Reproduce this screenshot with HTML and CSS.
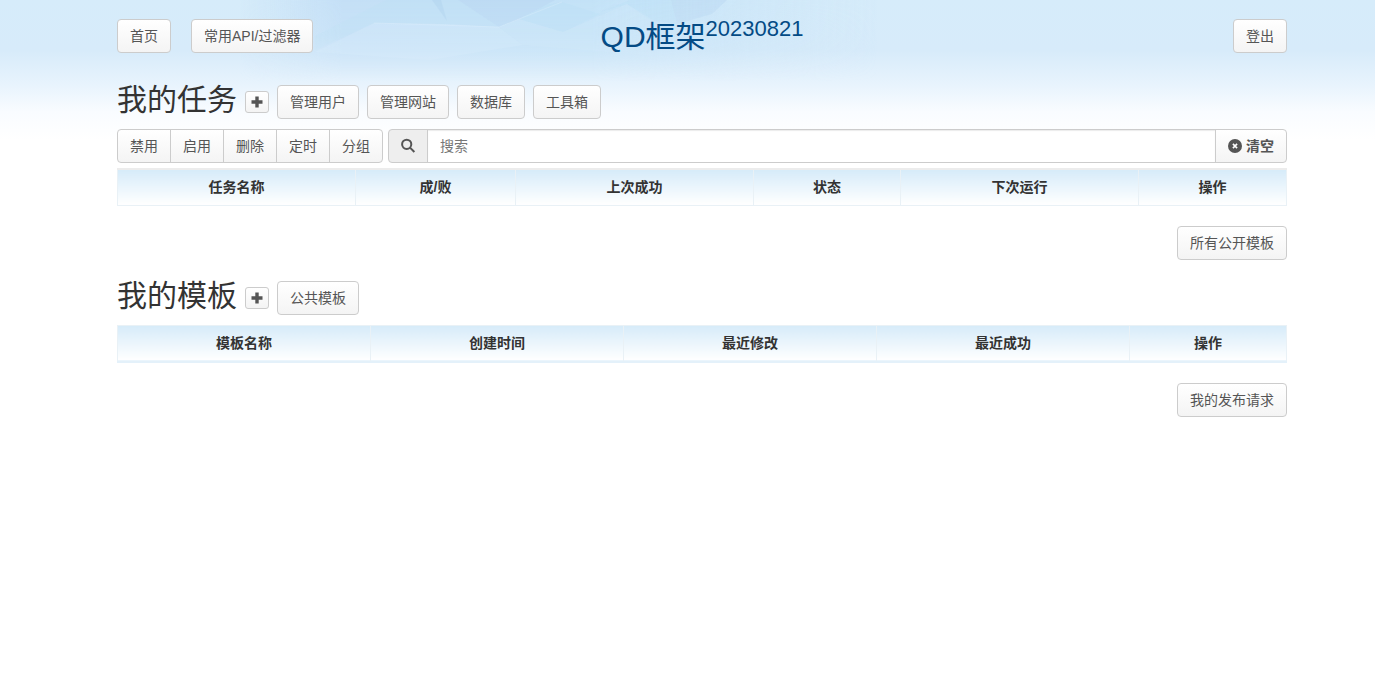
FILE: index.html
```html
<!DOCTYPE html>
<html lang="zh-CN">
<head>
<meta charset="utf-8">
<title>QD框架</title>
<link rel="stylesheet" href="styles.css">
</head>
<body>
<svg class="backdrop" viewBox="0 0 1375 140" preserveAspectRatio="xMidYMin slice" aria-hidden="true">
  <defs>
    <linearGradient id="base" x1="0" y1="0" x2="0" y2="1">
      <stop offset="0" stop-color="#d6ecfa"/>
      <stop offset=".36" stop-color="#d7ebfa"/>
      <stop offset=".62" stop-color="#e9f4fd"/>
      <stop offset=".8" stop-color="#f9fcff"/>
      <stop offset="1" stop-color="#fff"/>
    </linearGradient>
    <linearGradient id="glow" x1="0" y1="0" x2="1" y2="0">
      <stop offset="0" stop-color="#c4dff6" stop-opacity="0"/>
      <stop offset=".16" stop-color="#c4dff6"/>
      <stop offset=".55" stop-color="#c3e2f7"/>
      <stop offset="1" stop-color="#c8e3f7" stop-opacity="0"/>
    </linearGradient>
    <linearGradient id="fade" x1="0" y1="0" x2="0" y2="1">
      <stop offset="0" stop-color="#fff"/>
      <stop offset=".25" stop-color="#fff" stop-opacity=".8"/>
      <stop offset=".58" stop-color="#fff" stop-opacity="0"/>
    </linearGradient>
    <mask id="down"><rect width="1375" height="140" fill="url(#fade)"/></mask>
  </defs>
  <rect width="1375" height="140" fill="url(#base)"/>
  <g mask="url(#down)">
    <rect x="240" width="640" height="140" fill="url(#glow)"/>
    <path d="M315 36 386 0H458L499 27 447 24 374 23 315 50Z" fill="#bfe0f5" opacity=".45"/>
    <path d="M458 0H555L546 5 519 19 499 27Z" fill="#b3d3ef" opacity=".4"/>
    <path d="M432 0 447 21 441 0Z" fill="#a9cbea" opacity=".35"/>
    <path d="M546 5 519 19 563 32 600 14 562 2Z" fill="#b8dff5" opacity=".4"/>
    <path d="M600 12 630 0H671L677 24 650 20 627 4Z" fill="#b8dff5" opacity=".4"/>
    <path d="M315 52 374 23 447 24 499 27 523 45 430 60Z" fill="#d9edfb" opacity=".3"/>
    <path d="M499 27 519 19 563 32 627 4 660 24 650 55 523 45Z" fill="#d2e9fa" opacity=".3"/>
    <path d="M671 0H727L712 14 677 24Z" fill="#b3d2ef" opacity=".35"/>
    <path d="M374 23 499 27 519 19 562 2" fill="none" stroke="#e4f3fd" opacity=".3"/>
  </g>
</svg>
<div class="container">
  <header class="topbar">
    <nav class="nav">
      <a class="btn" href="#">首页</a>
      <a class="btn" href="#">常用API/过滤器</a>
    </nav>
    <h1 class="brand"><a href="#">QD框架<sup>20230821</sup></a></h1>
    <div class="account"><a class="btn" href="#">登出</a></div>
  </header>

  <main>
    <section>
      <div class="heading">
        <h2>我的任务</h2>
        <a class="btn add" href="#" aria-label="新建任务"><svg viewBox="0 0 12 12"><path d="M4.3 .5h3.4v3.8h3.8v3.4H7.7v3.8H4.3V7.7H.5V4.3h3.8z"/></svg></a>
        <a class="btn" href="#">管理用户</a>
        <a class="btn" href="#">管理网站</a>
        <a class="btn" href="#">数据库</a>
        <a class="btn" href="#">工具箱</a>
      </div>
      <div class="toolbar">
        <div class="group">
          <button class="btn" type="button">禁用</button>
          <button class="btn" type="button">启用</button>
          <button class="btn" type="button">删除</button>
          <button class="btn" type="button">定时</button>
          <button class="btn" type="button">分组</button>
        </div>
        <div class="search">
          <label class="addon" for="q" aria-label="搜索"><svg viewBox="0 0 14 14"><circle cx="5.7" cy="5.3" r="4.6"/><path d="m9 8.6 4.4 4.4"/></svg></label>
          <input id="q" type="text" placeholder="搜索">
          <button class="btn clear" type="button"><svg viewBox="0 0 14 14"><circle cx="7" cy="7" r="7"/><path d="m4.9 4.9 4.2 4.2m0-4.2L4.9 9.1"/></svg>清空</button>
        </div>
      </div>
      <table class="list tasks">
        <colgroup><col class="wide"><col class="ratio"><col class="wide"><col class="state"><col class="wide"><col></colgroup>
        <thead><tr><th>任务名称</th><th>成/败</th><th>上次成功</th><th>状态</th><th>下次运行</th><th>操作</th></tr></thead>
      </table>
      <div class="more"><a class="btn" href="#">所有公开模板</a></div>
    </section>

    <section>
      <div class="heading">
        <h2>我的模板</h2>
        <a class="btn add" href="#" aria-label="新建模板"><svg viewBox="0 0 12 12"><path d="M4.3 .5h3.4v3.8h3.8v3.4H7.7v3.8H4.3V7.7H.5V4.3h3.8z"/></svg></a>
        <a class="btn" href="#">公共模板</a>
      </div>
      <table class="list templates">
        <colgroup><col class="quarter"><col class="quarter"><col class="quarter"><col class="quarter"><col></colgroup>
        <thead><tr><th>模板名称</th><th>创建时间</th><th>最近修改</th><th>最近成功</th><th>操作</th></tr></thead>
      </table>
      <div class="more"><a class="btn" href="#">我的发布请求</a></div>
    </section>
  </main>
</div>
</body>
</html>
```
FILE: styles.css
```css
* { box-sizing: border-box; }

body {
  margin: 0;
  background: #fff;
  color: #333;
  font: 14px/20px "Liberation Sans", "Noto Sans CJK SC", sans-serif;
}

.backdrop {
  position: absolute;
  top: 0;
  left: 0;
  z-index: -1;
  width: 100%;
  height: 140px;
}

.container {
  max-width: 1201px;
  margin: 0 auto;
  padding: 0 1px 0 30px;
}

.btn {
  display: inline-flex;
  align-items: center;
  justify-content: center;
  height: 34px;
  padding: 0 12px;
  border: 1px solid #ccc;
  border-radius: 4px;
  background: linear-gradient(#fff, #f4f4f4);
  color: #555;
  font: inherit;
  text-decoration: none;
  white-space: nowrap;
  cursor: pointer;
}

.topbar {
  display: grid;
  grid-template-columns: 1fr auto 1fr;
  height: 72px;
  padding-top: 19px;
}

.nav { display: flex; gap: 20px; }
.account { text-align: right; }

.brand {
  margin: 0;
  font-size: 30px;
  font-weight: 400;
  line-height: 36px;
}
.brand a { color: #044b85; text-decoration: none; }
.brand sup {
  position: relative;
  top: -11px;
  font-size: 22px;
  line-height: 0;
  vertical-align: baseline;
}

.heading {
  display: flex;
  align-items: flex-start;
  gap: 8px;
  padding: 13px 0 10px;
}
.heading h2 {
  margin: 0;
  font-size: 30px;
  font-weight: 400;
  line-height: 30px;
}
.heading .add {
  align-self: center;
  width: 24px;
  height: 22px;
  padding: 0;
  border-radius: 3px;
}
.add svg { width: 12px; height: 12px; fill: #555; }

.toolbar { display: flex; gap: 5px; margin-bottom: 5px; }
.group { display: flex; }
.group .btn { border-radius: 0; }
.group .btn + .btn { margin-left: -1px; }
.group .btn:first-child { border-radius: 4px 0 0 4px; }
.group .btn:last-child { border-radius: 0 4px 4px 0; }

.search { display: flex; flex: 1; }
.addon {
  display: flex;
  align-items: center;
  justify-content: center;
  width: 40px;
  border: 1px solid #ccc;
  border-radius: 4px 0 0 4px;
  background: #eee;
}
.addon svg {
  width: 14px;
  height: 14px;
  fill: none;
  stroke: #555;
  stroke-width: 2;
  overflow: visible;
}
.search input {
  flex: 1;
  min-width: 0;
  height: 34px;
  margin: 0 -1px;
  padding: 0 12px;
  border: 1px solid #ccc;
  background: #fff;
  box-shadow: inset 0 1px 1px rgba(0, 0, 0, .08);
  color: #555;
  font: inherit;
}
.search input::placeholder { color: #777; }
.clear {
  gap: 4px;
  border-radius: 0 4px 4px 0;
  font-weight: 700;
}
.clear svg { width: 14px; height: 14px; fill: #555; stroke: #fff; stroke-width: 1.6; }
.clear circle { stroke: none; }

.list {
  width: 100%;
  border-collapse: collapse;
  table-layout: fixed;
  border: 1px solid #e9f1f6;
}
.list th {
  height: 36px;
  padding: 0;
  border: 1px solid #e9f1f6;
  background: linear-gradient(#d6ebf9, #fff);
  font-weight: 700;
}
.tasks { border-top: 2px solid #ececec; }
.templates { border-bottom: 2px solid #e4f1fa; }
.templates th { height: 37px; }
.wide { width: 238px; }
.ratio { width: 160px; }
.state { width: 147px; }
.quarter { width: 253px; }

.more {
  display: flex;
  justify-content: flex-end;
  padding: 20px 0 8px;
}
```
